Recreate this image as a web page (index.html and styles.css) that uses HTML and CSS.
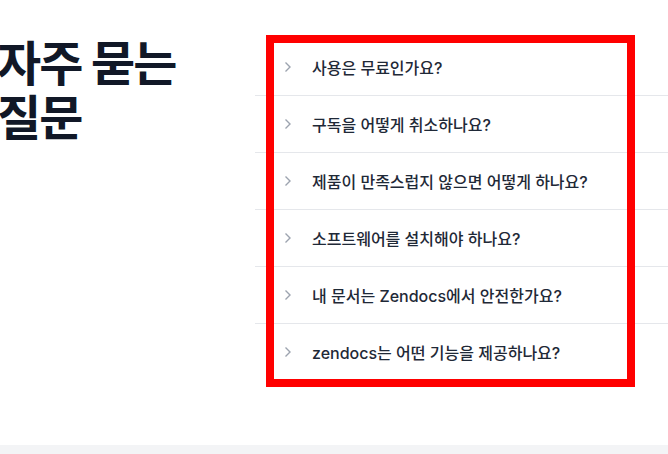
FILE: index.html
```html
<!doctype html>
<html lang="ko">
<head>
<meta charset="utf-8">
<title>자주 묻는 질문</title>
<link rel="stylesheet" href="styles.css">
</head>
<body>

<section class="faq">
  <h2 class="faq-title">자주 묻는<br>질문</h2>

  <div class="faq-list">
    <details class="faq-item">
      <summary><span class="chevron"><svg width="8" height="12" viewBox="0 0 8 12"><path d="M1.5 1.5 6 6l-4.5 4.5" fill="none" stroke="currentColor" stroke-width="1.4"/></svg></span>사용은 무료인가요?</summary>
    </details>
    <details class="faq-item">
      <summary><span class="chevron"><svg width="8" height="12" viewBox="0 0 8 12"><path d="M1.5 1.5 6 6l-4.5 4.5" fill="none" stroke="currentColor" stroke-width="1.4"/></svg></span>구독을 어떻게 취소하나요?</summary>
    </details>
    <details class="faq-item">
      <summary><span class="chevron"><svg width="8" height="12" viewBox="0 0 8 12"><path d="M1.5 1.5 6 6l-4.5 4.5" fill="none" stroke="currentColor" stroke-width="1.4"/></svg></span>제품이 만족스럽지 않으면 어떻게 하나요?</summary>
    </details>
    <details class="faq-item">
      <summary><span class="chevron"><svg width="8" height="12" viewBox="0 0 8 12"><path d="M1.5 1.5 6 6l-4.5 4.5" fill="none" stroke="currentColor" stroke-width="1.4"/></svg></span>소프트웨어를 설치해야 하나요?</summary>
    </details>
    <details class="faq-item">
      <summary><span class="chevron"><svg width="8" height="12" viewBox="0 0 8 12"><path d="M1.5 1.5 6 6l-4.5 4.5" fill="none" stroke="currentColor" stroke-width="1.4"/></svg></span>내 문서는 Zendocs에서 안전한가요?</summary>
    </details>
    <details class="faq-item">
      <summary><span class="chevron"><svg width="8" height="12" viewBox="0 0 8 12"><path d="M1.5 1.5 6 6l-4.5 4.5" fill="none" stroke="currentColor" stroke-width="1.4"/></svg></span>zendocs는 어떤 기능을 제공하나요?</summary>
    </details>
  </div>

  <!-- annotation box drawn over the list -->
  <div class="highlight"></div>
</section>

<footer class="band"></footer>

</body>
</html>
```

FILE: styles.css
```css
body {
  margin: 0;
  background: #fff;
  color: #111827;
  font-family: Inter, "Noto Sans CJK KR", sans-serif;
}

.faq {
  position: relative;
  display: grid;
  grid-template-columns: 255px 1fr;
  padding-top: 39px;
  height: 406px;
}

.faq-title {
  margin: -2px 0 0 -3px;
  font-size: 48px;
  line-height: 54px;
  font-weight: 700;
  letter-spacing: -0.04em;
  color: #111827;
}

.faq-list {
  display: flex;
  flex-direction: column;
}

.faq-item + .faq-item {
  border-top: 1px solid #e5e7eb;
}

.faq-item summary {
  display: flex;
  align-items: center;
  gap: 20px;
  height: 56px;
  padding-left: 29px;
  list-style: none;
  font-size: 16px;
  font-weight: 500;
  color: #1f2937;
  cursor: pointer;
}
.faq-item summary::-webkit-details-marker { display: none; }

.chevron {
  display: flex;
  color: #9ca3af;
}

.highlight {
  position: absolute;
  left: 266px;
  top: 35px;
  width: 369px;
  height: 352px;
  box-sizing: border-box;
  border: 8px solid #ff0000;
  pointer-events: none;
}

.band {
  height: 9px;
  background: #f3f4f6;
}
```
